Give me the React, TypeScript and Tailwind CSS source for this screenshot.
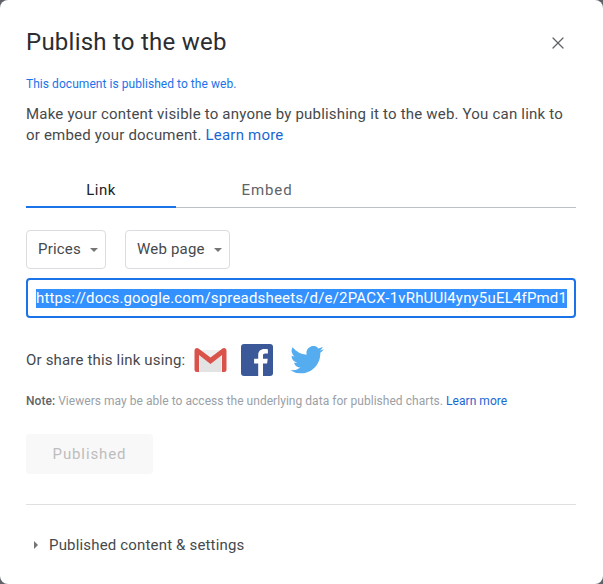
import { X } from "lucide-react"

function SelectBox({ label, className }: { label: string; className: string }) {
  return (
    <div className={`flex h-[39px] items-center rounded-[4px] border border-[#dadce0] pl-[11px] text-[15px] tracking-[0.2px] text-[#46494c] ${className}`}>
      <span>{label}</span>
      <span className="ml-[9px] h-0 w-0 border-x-[4px] border-t-[4px] border-x-transparent border-t-[#757575]" />
    </div>
  )
}

function GmailIcon() {
  return (
    <svg width="33" height="26" viewBox="0 0 33 26">
      <path d="M1 3h31v20a2 2 0 0 1-2 2H3a2 2 0 0 1-2-2z" fill="#efefef" />
      <path d="M6 7l10.500 9L27 7v18H6z" fill="#e3e3e3" />
      <path d="M5 25V8l11.500 9L28 8v17h2a2.500 2.500 0 0 0 2.500-2.500V3.500a2.500 2.500 0 0 0-4-2L16.500 10.500 4.500 1.500a2.500 2.500 0 0 0-4 2v19A2.500 2.500 0 0 0 3 25z" fill="#d9534a" />
    </svg>
  )
}

function FacebookIcon() {
  return (
    <svg width="32" height="32" viewBox="0 0 32 32">
      <rect width="32" height="32" rx="3" fill="#3b5998" />
      <path d="M22 32V19.600h4.100l.6-4.800H22v-3c0-1.400.4-2.300 2.400-2.300h2.500V5.200c-.4-.1-1.900-.2-3.600-.2-3.600 0-6.100 2.200-6.100 6.200v3.600h-4.100v4.800h4.100V32z" fill="#fff" />
    </svg>
  )
}

function TwitterIcon() {
  return (
    <svg width="34" height="28" viewBox="0 0 24 20">
      <path d="M24 2.400a9.800 9.800 0 0 1-2.800.8A4.900 4.900 0 0 0 23.300.5a9.800 9.800 0 0 1-3.100 1.200 4.900 4.900 0 0 0-8.400 4.500A14 14 0 0 1 1.700.9a4.900 4.900 0 0 0 1.500 6.600 4.900 4.900 0 0 1-2.200-.6v.1a4.900 4.900 0 0 0 3.900 4.800 4.900 4.900 0 0 1-2.200.1 4.900 4.900 0 0 0 4.600 3.400A9.900 9.900 0 0 1 0 17.300 14 14 0 0 0 7.500 19.500c9.100 0 14-7.500 14-14v-.6A10 10 0 0 0 24 2.400z" fill="#55acee" />
    </svg>
  )
}

export default function App() {
  return (
    <div className="h-[584px] w-[603px] overflow-hidden bg-[#5f6368] font-['Roboto',sans-serif]">
      <div className="h-full rounded-[8px] bg-white pl-[26px] pr-[27px] pt-[26px]">
        {/* Header */}
        <div className="flex h-[32px] items-center justify-between">
          <h1 className="text-[24px] leading-[32px] tracking-[0.24px] text-[#2b2d30]">Publish to the web</h1>
          <X size={20} strokeWidth={1.5} className="mr-[8px] mt-[2px] text-[#5f6368]" />
        </div>

        <p className="mt-[18px] text-[12px] leading-[16px] tracking-[0.05px] text-[#1a73e8]">This document is published to the web.</p>
        <p className="mt-[12px] text-[15px] leading-[21px] tracking-[0.2px] text-[#46494c]">
          Make your content visible to anyone by publishing it to the web. You can link to or embed your document.{" "}
          <span className="text-[#1967d2]">Learn more</span>
        </p>

        {/* Tabs */}
        <div className="mt-[23px] flex h-[39px] border-b border-[#bdc1c6] text-[15px]">
          <div className="-mb-px flex w-[150px] justify-center border-b-2 border-[#1a73e8] pt-[10px] tracking-[0.5px] text-[#202124]">Link</div>
          <div className="flex w-[182px] justify-center pt-[10px] tracking-[0.9px] text-[#5f6368]">Embed</div>
        </div>

        <div className="mt-[22px] flex gap-[19px]">
          <SelectBox label="Prices" className="w-[80px]" />
          <SelectBox label="Web page" className="w-[105px]" />
        </div>

        <div className="mt-[9px] flex h-[40px] items-center overflow-hidden rounded-[4px] border-2 border-[#1a73e8] pl-[8px] text-[15px] tracking-[0.18px] whitespace-nowrap">
          <span className="bg-[#3390ff] leading-[19px] text-white">https://docs.google.com/spreadsheets/d/e/2PACX-1vRhUUl4yny5uEL4fPmd1</span>
        </div>

        {/* Share */}
        <div className="mt-[26px] flex h-[32px] items-center text-[15px] tracking-[0.17px] text-[#46494c]">
          <span>Or share this link using:</span>
          <span className="ml-[9px] flex items-center"><GmailIcon /></span>
          <span className="ml-[14px] flex items-center"><FacebookIcon /></span>
          <span className="ml-[17px] flex items-center"><TwitterIcon /></span>
        </div>

        <p className="mt-[16px] text-[12px] leading-[18px] tracking-[0.04px] text-[#9aa0a6]">
          <span className="font-medium text-[#5f6368]">Note:</span> Viewers may be able to access the underlying data for published charts.{" "}
          <span className="text-[#1967d2]">Learn more</span>
        </p>

        <div className="mt-[24px] flex h-[40px] w-[127px] items-center justify-center rounded-[4px] bg-[#f8f8f8] text-[15px] tracking-[0.9px] text-[#bdbdbd]">
          Published
        </div>

        <div className="mt-[30px] border-t border-[#e0e0e0]" />

        <div className="mt-[30px] flex h-[20px] items-center text-[15px] tracking-[0.17px] text-[#46494c]">
          <span className="ml-[8px] h-0 w-0 border-y-[4px] border-l-[4px] border-y-transparent border-l-[#757575]" />
          <span className="ml-[11px]">Published content &amp; settings</span>
        </div>
      </div>
    </div>
  )
}
